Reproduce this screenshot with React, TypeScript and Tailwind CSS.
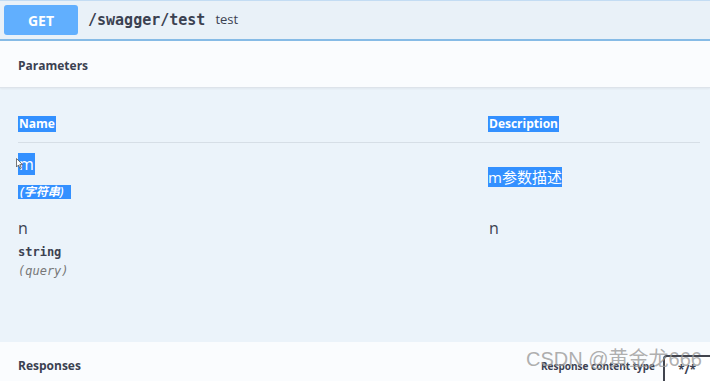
import React from 'react';

const sans = "font-['Open_Sans','Noto_Sans_CJK_SC',sans-serif]";
const mono = "font-['DejaVu_Sans_Mono','Liberation_Mono',monospace]";

export default function App() {
  return (
    <div className={`w-[710px] h-[381px] overflow-hidden flex flex-col bg-[#ebf3fa] text-[#3b4151] ${sans}`}>
      {/* summary bar */}
      <div className="h-[41px] shrink-0 flex items-center bg-[#e9f1f8] border-t border-[#c3dcf3] border-b-2 border-b-[#86bbe6] pl-1">
        <div className="w-[74px] h-[30px] rounded-[3px] bg-[#61affe] flex items-center justify-center text-white text-[14px] font-bold">
          GET
        </div>
        <span className={`ml-[10px] text-[15px] font-semibold text-[#3b4151] ${mono}`}>/swagger/test</span>
        <span className="ml-[10px] text-[13px] text-[#3b4151]">test</span>
      </div>

      {/* parameters header */}
      <div className="h-[47px] shrink-0 flex items-center px-[18px] pt-[3px] bg-[#fafcfe] border-b border-[#dde3ea] shadow-[0_1px_2px_rgba(0,0,0,0.05)]">
        <span className="text-[12px] font-bold text-[#3b4151]">Parameters</span>
      </div>

      {/* table */}
      <div className="flex-1 flex flex-col pl-[18px] pr-[10px] pt-[28px]">
        <div className="flex items-start pb-[10px] border-b border-[#d6dee6]">
          <div className="w-[470px] flex">
            <span className="bg-[#3390ff] text-white text-[12px] leading-[16px] font-bold px-[1px]">Name</span>
          </div>
          <div className="flex">
            <span className="bg-[#3390ff] text-white text-[12px] leading-[16px] font-bold px-[1px]">Description</span>
          </div>
        </div>

        <div className="flex items-start pt-[10px]">
          <div className="w-[470px] flex flex-col items-start">
            <div className="relative flex">
              <span className="bg-[#3390ff] text-white text-[16px] leading-[22px] px-[1px]">m</span>
              <svg className="absolute left-[-2px] top-[5px]" width="7" height="11" viewBox="0 0 7 11">
                <path d="M0.5 0.5 L0.5 9 L2.5 7 L4 10.5 L5.3 10 L3.8 6.6 L6.5 6.6 Z" fill="#fff" stroke="#555" strokeWidth="0.8" />
              </svg>
            </div>
            <span className="mt-[10px] bg-[#3390ff] text-white text-[12px] italic font-semibold leading-[14px] pl-[2px] pr-[7px]">(字符串)</span>
          </div>
          <div className="flex pt-[14px]">
            <span className="bg-[#3390ff] text-white text-[15px] leading-[20px]">m参数描述</span>
          </div>
        </div>

        <div className="flex items-start pt-[18px]">
          <div className="w-[470px] flex flex-col items-start">
            <span className="text-[16px] leading-[22px] text-[#3b4151]">n</span>
            <span className={`mt-[4px] text-[12px] leading-[18px] font-bold text-[#3b4151] ${mono}`}>string</span>
            <span className={`mt-[1px] text-[12px] leading-[18px] italic text-[#777] ${mono}`}>(query)</span>
          </div>
          <div className="flex pl-[1px]">
            <span className="text-[16px] leading-[22px] text-[#3b4151]">n</span>
          </div>
        </div>
      </div>

      {/* responses header */}
      <div className="h-[39px] shrink-0 flex items-center bg-[#fafcfe] pl-[18px] relative overflow-hidden">
        <span className="text-[12px] font-bold text-[#3b4151] mt-[9px]">Responses</span>
        <div className="ml-auto flex items-center mt-[9px] mr-[-14px]">
          <span className="text-[10px] font-bold text-[#3b4151] mr-[8px]">Response content type</span>
          <div className="w-[61px] h-[31px] mt-[8px] shrink-0 border-2 border-[#41444e] rounded-[4px] bg-white flex items-center pl-[13px] text-[12px] font-bold text-[#3b4151]">
            */*
          </div>
        </div>
        <span className="absolute left-[526px] top-[2px] text-[20px] text-[#9a9a9a]/80 font-['Liberation_Sans','Noto_Sans_CJK_SC',sans-serif] pointer-events-none">
          CSDN @黄金龙666
        </span>
      </div>
    </div>
  );
}
